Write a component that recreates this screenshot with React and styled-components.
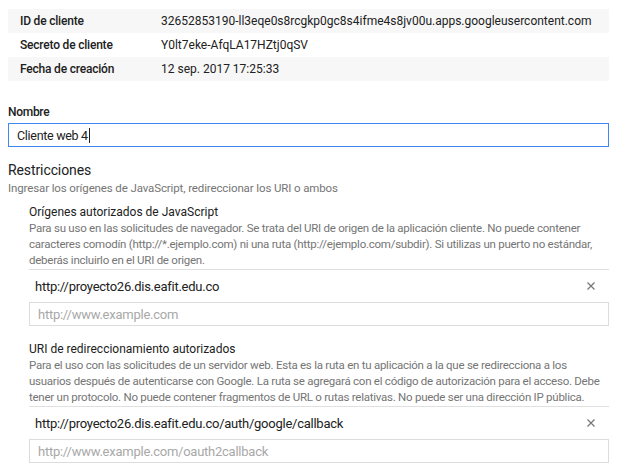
import React from "react";
import styled, { createGlobalStyle } from "styled-components";

const GlobalStyle = createGlobalStyle`
  body {
    margin: 8px;
    background: #fff;
    font-family: Roboto, "Noto Sans", Arial, sans-serif;
    color: #212121;
  }
`;

const details = [
  ["ID de cliente", "32652853190-ll3eqe0s8rcgkp0gc8s4ifme4s8jv00u.apps.googleusercontent.com"],
  ["Secreto de cliente", "Y0lt7eke-AfqLA17HZtj0qSV"],
  ["Fecha de creación", "12 sep. 2017 17:25:33"],
];

const sections = [
  {
    title: "Orígenes autorizados de JavaScript",
    text: "Para su uso en las solicitudes de navegador. Se trata del URI de origen de la aplicación cliente. No puede contener caracteres comodín (http://*.ejemplo.com) ni una ruta (http://ejemplo.com/subdir). Si utilizas un puerto no estándar, deberás incluirlo en el URI de origen.",
    url: "http://proyecto26.dis.eafit.edu.co",
    placeholder: "http://www.example.com",
  },
  {
    title: "URI de redireccionamiento autorizados",
    text: "Para el uso con las solicitudes de un servidor web. Esta es la ruta en tu aplicación a la que se redirecciona a los usuarios después de autenticarse con Google. La ruta se agregará con el código de autorización para el acceso. Debe tener un protocolo. No puede contener fragmentos de URL o rutas relativas. No puede ser una dirección IP pública.",
    url: "http://proyecto26.dis.eafit.edu.co/auth/google/callback",
    placeholder: "http://www.example.com/oauth2callback",
  },
];

const App = () => {
  return (
    <Page>
      <GlobalStyle />
      <DetailsTable>
        {details.map(([label, value], i) => (
          <DetailRow key={label} shaded={i % 2 === 0}>
            <DetailLabel>{label}</DetailLabel>
            <DetailValue>{value}</DetailValue>
          </DetailRow>
        ))}
      </DetailsTable>

      <FieldLabel>Nombre</FieldLabel>
      <NameInput>
        Cliente web 4
        <Caret />
      </NameInput>

      <SectionTitle>Restricciones</SectionTitle>
      <SectionHint>Ingresar los orígenes de JavaScript, redireccionar los URI o ambos</SectionHint>

      {sections.map((s) => (
        <Subsection key={s.title}>
          <SubTitle>{s.title}</SubTitle>
          <SubText>{s.text}</SubText>
          <UrlRow>
            <span>{s.url}</span>
            <RemoveIcon viewBox="0 0 8 8">
              <path d="M0.5 0.5 L7.5 7.5 M7.5 0.5 L0.5 7.5" />
            </RemoveIcon>
          </UrlRow>
          <UrlInput placeholder={s.placeholder} />
        </Subsection>
      ))}
    </Page>
  );
};
export default App;

// CSS STYLED COMPONENTS =>
const Page = styled.div`
  width: 601px;
  padding-top: 1px;
`;
const DetailsTable = styled.div`
  display: flex;
  flex-direction: column;
`;
const DetailRow = styled.div.withConfig({ shouldForwardProp: (p) => p !== "shaded" })`
  display: grid;
  grid-template-columns: 141px 1fr;
  align-items: center;
  height: 24px;
  padding-left: 12px;
  background: ${(p) => (p.shaded ? "#f7f7f7" : "#fff")};
`;
const DetailLabel = styled.div`
  font-size: 12px;
  font-weight: 500;
  letter-spacing: -0.2px;
  color: #212121;
`;
const DetailValue = styled.div`
  font-size: 12px;
  color: #212121;
  white-space: nowrap;
`;
const FieldLabel = styled.div`
  margin-top: 23px;
  font-size: 12px;
  line-height: 16px;
  font-weight: 500;
  letter-spacing: -0.3px;
`;
const NameInput = styled.div`
  display: flex;
  align-items: center;
  box-sizing: border-box;
  height: 24px;
  margin-top: 3px;
  padding-left: 8px;
  border: 1px solid #4285f4;
  font-size: 12.5px;
  letter-spacing: -0.3px;
  color: #212121;
`;
const Caret = styled.span`
  display: inline-block;
  width: 1px;
  height: 15px;
  margin-left: 1px;
  background: #212121;
`;
const SectionTitle = styled.div`
  margin-top: 13px;
  font-size: 14px;
  line-height: 20px;
  font-weight: 400;
  letter-spacing: -0.1px;
`;
const SectionHint = styled.div`
  font-size: 11.5px;
  line-height: 16px;
  letter-spacing: -0.12px;
  color: #757575;
`;
const Subsection = styled.div`
  margin-left: 21px;
  margin-top: 8px;
  & + & {
    margin-top: 15px;
  }
`;
const SubTitle = styled.div`
  font-size: 12px;
  line-height: 16px;
  font-weight: 400;
  color: #212121;
`;
const SubText = styled.div`
  font-size: 11.5px;
  line-height: 16px;
  letter-spacing: -0.25px;
  color: #757575;
  padding-bottom: 1px;
  border-bottom: 1px solid #e0e0e0;
`;
const UrlRow = styled.div`
  display: flex;
  align-items: center;
  justify-content: space-between;
  height: 32px;
  padding: 0 14px 0 6px;
  font-size: 13px;
  letter-spacing: -0.25px;
  color: #212121;
`;
const RemoveIcon = styled.svg`
  width: 8px;
  height: 8px;
  stroke: #757575;
  stroke-width: 1.2;
  fill: none;
`;
const UrlInput = styled.input`
  display: block;
  box-sizing: border-box;
  width: 100%;
  height: 24px;
  margin: 0;
  padding: 0 8px;
  border: 1px solid #dcdcdc;
  border-radius: 0;
  outline: none;
  font-family: Roboto, "Noto Sans", Arial, sans-serif;
  font-size: 13px;
  letter-spacing: -0.25px;
  color: #212121;
  &::placeholder {
    color: #a8a8a8;
  }
`;
